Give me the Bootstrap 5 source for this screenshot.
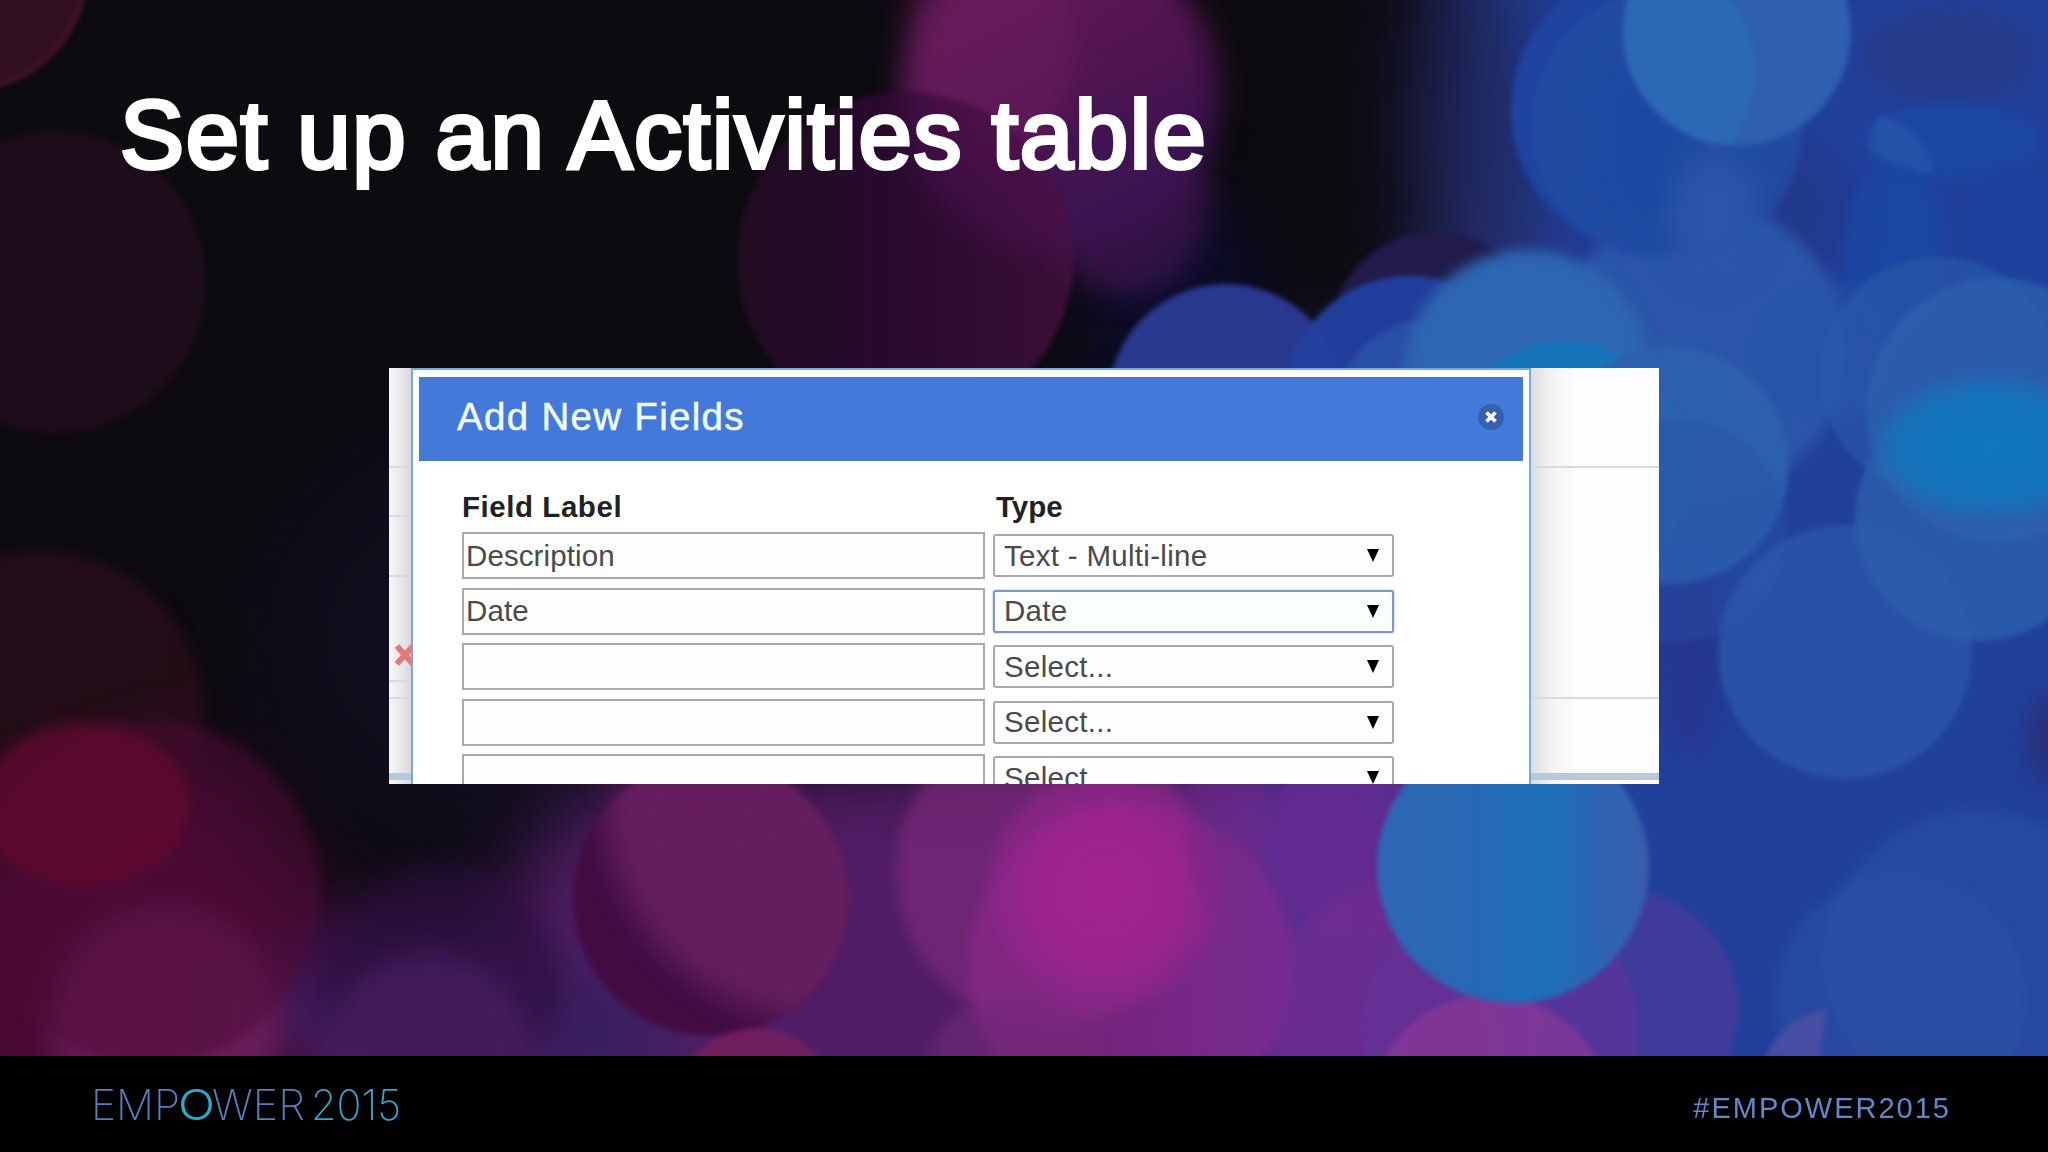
<!DOCTYPE html>
<html lang="en">
<head>
<meta charset="utf-8">
<meta name="viewport" content="width=device-width, initial-scale=1">
<title>Set up an Activities table</title>
<link href="https://cdn.jsdelivr.net/npm/bootstrap@5.3.0/dist/css/bootstrap.min.css" rel="stylesheet">
<style>
  body { font-family: "Liberation Sans", Arial, sans-serif; background: #0c0a12; overflow: hidden; }
  .slide { width: 2048px; height: 1152px; }
  .bokeh { z-index: 0; }
  .bokeh filter { color-interpolation-filters: sRGB; }
  .slide-head { height: 368px; padding: 75px 0 0 120px; z-index: 1; }
  .slide-title { font-size: 96px; line-height: 120px; letter-spacing: 1.6px; font-weight: 400; color: #fff; -webkit-text-stroke: 4px #fff; }
  .slide-body { padding-left: 389px; z-index: 1; }
  .shot { width: 1270px; height: 416px; background: #fdfdfe; }
  .shot-left { width: 22px; background: linear-gradient(90deg, #f7f7f7, #d9dadd); }
  .shot-right { width: 128px; background: linear-gradient(90deg, #dcdde0, #f4f4f6 22px, #fdfdff 48px); }
  .rule { height: 2px; background: #d9dade; }
  .rule-blue { height: 7px; background: #b9c8d9; margin-bottom: 4px; }
  .dlg { width: 1120px; border: 2px solid #76a9dc; border-bottom: 0; padding: 7px 6px 0; background: #fff; }
  .dlg-head { height: 84px; background: #4379d8; border-top: 1px solid #5a6fc0; border-bottom: 2px solid #4c7cbc; padding: 0 18px 2px 38px; }
  .dlg-title { font-size: 38.5px; letter-spacing: 1.3px; color: #f0fbff; line-height: 1; -webkit-text-stroke: .5px #f0fbff; }
  .dlg-body { padding: 27px 0 0 43px; }
  .col-label { width: 531px; }
  .heads { height: 44px; font-size: 29.5px; font-weight: 700; line-height: 37px; color: #222; letter-spacing: .55px; }
  .heads .type-head { letter-spacing: 0; padding-left: 3px; }
  .line-row { height: 55.6px; }
  .fld { width: 523px; height: 47px; border: 2px solid #aaa9ab; border-radius: 0; padding: 0 2px; font-size: 29.5px; letter-spacing: .1px; color: #4a4a4c; background: #fefefe; }
  .sel-wrap { width: 401px; margin-left: 8px; height: 42.5px; margin-top: 2px; }
  .sel { height: 43px; border: 2px solid #a9a9aa; border-radius: 3px; padding: 0 0 0 9px; font-size: 29.5px; line-height: 38px; letter-spacing: .3px; color: #4a4a4c; background: #fefefe none; }
  .sel.active-sel { border-color: #8296c2; background-color: #fafffe; box-shadow: 0 0 2px #7f9fd0; }
  .tri { right: 15px; top: 15px; }
  .foot { height: 96px; background: #000; padding: 0 97px 0 0; z-index: 1; }
  .hashtag { font-size: 29px; letter-spacing: 2px; line-height: 30px; color: #6189c9; margin-top: 7px; }
  .brand { font-family: Inter, "Liberation Sans", sans-serif; font-size: 42.5px; font-weight: 200; }
</style>
</head>
<body>
<main class="slide position-relative d-flex flex-column">
  <svg class="bokeh position-absolute top-0 start-0" width="2048" height="1058" viewBox="0 0 2048 1058" aria-hidden="true">
    <defs>
      <filter id="b1" x="-20%" y="-20%" width="140%" height="140%"><feGaussianBlur stdDeviation="2.5"/></filter>
      <filter id="bs" x="-20%" y="-20%" width="140%" height="140%"><feGaussianBlur stdDeviation="6"/></filter>
      <filter id="b2" x="-30%" y="-30%" width="160%" height="160%"><feGaussianBlur stdDeviation="14"/></filter>
      <filter id="b3" x="-50%" y="-50%" width="200%" height="200%"><feGaussianBlur stdDeviation="40"/></filter>
      <linearGradient id="orb"><stop offset="0" stop-color="#2f68b4"/><stop offset=".35" stop-color="#2868b4"/><stop offset=".6" stop-color="#1c6fba"/><stop offset="1" stop-color="#3a5dac"/></linearGradient>
      <linearGradient id="mag" x1="0" y1="0" x2=".5" y2="1"><stop offset="0" stop-color="#6d1c5e"/><stop offset=".6" stop-color="#501450"/><stop offset="1" stop-color="#32104f"/></linearGradient>
      <linearGradient id="plum" x1="0" x2="1"><stop offset="0" stop-color="#280e28"/><stop offset=".45" stop-color="#340a3a"/><stop offset="1" stop-color="#4d1145"/></linearGradient>
      <radialGradient id="hot"><stop offset="0" stop-color="#a5238f"/><stop offset=".6" stop-color="#a0248e" stop-opacity=".85"/><stop offset="1" stop-color="#90268c" stop-opacity=".45"/></radialGradient>
      <radialGradient id="cyan"><stop offset="0" stop-color="#0f78be"/><stop offset=".7" stop-color="#1475bc"/><stop offset="1" stop-color="#1c70b8" stop-opacity=".6"/></radialGradient>
      <clipPath id="orbClip"><circle cx="711" cy="898" r="138"/></clipPath>
      <clipPath id="topClip"><circle cx="1737" cy="32" r="114"/></clipPath>
    </defs>
    <rect width="2048" height="1058" fill="#0d0a10"/>
    <g filter="url(#b3)">
      <ellipse cx="500" cy="640" rx="240" ry="220" fill="#110d1c"/>
      <path d="M1440 -80H2150V1150H1300L1380 800L1180 430L1420 320Z" fill="#20409c"/>
      <path d="M590 790L1420 720L1480 1150H350L420 1010Z" fill="#521d66"/>
      <path d="M1180 740H1420V1120H1180Z" fill="#5c2c90"/>
      <path d="M-80 860L200 760L370 960V1140H-80Z" fill="#4a0a35"/>
      <ellipse cx="1180" cy="330" rx="80" ry="130" fill="#0b0c2e"/>
      <ellipse cx="1475" cy="130" rx="60" ry="190" fill="#20275f"/>
      <ellipse cx="1500" cy="250" rx="50" ry="60" fill="#262a68"/>
      <ellipse cx="440" cy="1010" rx="200" ry="80" fill="#3d1b5e"/>
      <ellipse cx="610" cy="1040" rx="60" ry="60" fill="#33205e"/>
    </g>
    <g filter="url(#b2)">
      <circle cx="1060" cy="95" r="160" fill="url(#mag)"/>
      <ellipse cx="1125" cy="200" rx="85" ry="95" fill="#401552" opacity=".7"/>
      <ellipse cx="990" cy="40" rx="85" ry="130" fill="#6e1d5e" opacity=".5"/>
      <circle cx="165" cy="1020" r="115" fill="#72205f" opacity=".8"/>
      <circle cx="440" cy="985" r="120" fill="#2c0e3e" opacity=".65"/>
      <circle cx="430" cy="1060" r="105" fill="#4c2069" opacity=".65"/>
      <ellipse cx="1800" cy="210" rx="55" ry="75" fill="#223a8e"/>
      <ellipse cx="1950" cy="55" rx="90" ry="50" fill="#253b88"/>
      <ellipse cx="2052" cy="740" rx="25" ry="50" fill="#28307a"/>
      <ellipse cx="1690" cy="650" rx="35" ry="110" fill="#26368f"/>
    </g>
    <g filter="url(#bs)">
      <circle cx="40" cy="715" r="164" fill="#3c1020" opacity=".5"/>
      <circle cx="148" cy="892" r="172" fill="#4c0b34" opacity=".55"/>
      <ellipse cx="85" cy="805" rx="104" ry="82" fill="#640a30" opacity=".75"/>
      <circle cx="1050" cy="872" r="154" fill="#782878" opacity=".72"/>
      <circle cx="1130" cy="965" r="162" fill="#8c298e" opacity=".6"/>
      <circle cx="1105" cy="890" r="118" fill="url(#hot)"/>
      <circle cx="1010" cy="1080" r="85" fill="#742a78" opacity=".55"/>
      <ellipse cx="1225" cy="820" rx="40" ry="100" fill="#752888" opacity=".4"/>
      <circle cx="1370" cy="840" r="100" fill="#6a2994" opacity=".5"/>
      <circle cx="1410" cy="1015" r="138" fill="#742d94" opacity=".6"/>
      <circle cx="1975" cy="960" r="150" fill="#2b50a5" opacity=".55"/>
      <circle cx="1900" cy="1000" r="125" fill="#3054a8" opacity=".45"/>
      <ellipse cx="1950" cy="140" rx="88" ry="36" fill="#1c48a2"/>
      <ellipse cx="1895" cy="250" rx="50" ry="90" fill="#1a47a2" opacity=".8"/>
      <ellipse cx="2010" cy="240" rx="42" ry="80" fill="#1d429d"/>
      <circle cx="1702" cy="350" r="146" fill="#2a55a8"/>
      <circle cx="1820" cy="350" r="70" fill="#2856a8" opacity=".4"/>
    </g>
    <g filter="url(#b1)">
      <circle cx="-35" cy="-32" r="122" fill="#32101f" stroke="#48142a" stroke-width="4"/>
      <circle cx="55" cy="282" r="151" fill="#1d0d1b"/>
      <circle cx="905" cy="260" r="168" fill="url(#plum)" opacity=".72"/>

      <circle cx="711" cy="898" r="138" fill="#430d44"/>
      <g clip-path="url(#orbClip)"><circle cx="826" cy="800" r="222" fill="#662062" filter="url(#b2)" opacity=".92"/></g>
      <ellipse cx="700" cy="770" rx="100" ry="50" fill="#6a1a5c" opacity=".45" filter="url(#b2)"/>
      <circle cx="755" cy="1112" r="84" fill="#7a205c" opacity=".7"/>
      <circle cx="1620" cy="1008" r="119" fill="#48399a" opacity=".75"/>
      <circle cx="1500" cy="1030" r="138" fill="#64329a" opacity=".65"/>
      <circle cx="1490" cy="1115" r="120" fill="#923896" opacity=".6"/>

      <circle cx="1436" cy="338" r="106" fill="#211c4c"/>
      <circle cx="1655" cy="110" r="144" fill="#1e449f"/>
      <circle cx="1668" cy="125" r="136" fill="#2350a7" opacity=".6"/>
      <ellipse cx="1640" cy="140" rx="42" ry="95" fill="#1947a0" opacity=".6" filter="url(#b2)"/>
      <path d="M1878 115Q1925 125 1934 174Q1880 165 1868 145Z" fill="#2551a7"/>
      <ellipse cx="1715" cy="215" rx="45" ry="60" fill="#2a55a8" filter="url(#b2)"/>
      <g clip-path="url(#topClip)">
        <circle cx="1737" cy="32" r="114" fill="#2e60af"/>
        <circle cx="1640" cy="70" r="115" fill="#2c69b5"/>
      </g>

      <circle cx="1226" cy="402" r="118" fill="#29388f"/>
      <circle cx="1410" cy="402" r="126" fill="#2340a0" opacity=".95"/>
      <circle cx="1430" cy="415" r="95" fill="#2a55ab" opacity=".8"/>
      <circle cx="1527" cy="372" r="122" fill="#2e66b1" filter="url(#bs)"/>
      <circle cx="1565" cy="465" r="124" fill="#1476bc" opacity=".9"/>
      <circle cx="1670" cy="465" r="119" fill="#2c61ad" opacity=".88"/>
      <circle cx="1675" cy="530" r="112" fill="#2857aa" opacity=".35"/>

      <circle cx="1938" cy="375" r="118" fill="#2b59aa" opacity=".65"/>
      <circle cx="1998" cy="410" r="132" fill="#2e62ae" opacity=".75"/>
      <circle cx="1978" cy="518" r="123" fill="#2e61ae" opacity=".75"/>
      <ellipse cx="1990" cy="447" rx="112" ry="70" fill="url(#cyan)" filter="url(#bs)"/>
      <circle cx="1845" cy="652" r="127" fill="#2f5eac" opacity=".62"/>
      <path d="M1765 1058Q1780 1020 1827 1008L1820 1058Z" fill="#514fa5" opacity=".8"/>
      <circle cx="1513" cy="867" r="136" fill="url(#orb)"/>
    </g>
  </svg>

  <header class="slide-head position-relative">
    <h1 class="slide-title m-0 text-nowrap">Set up an Activities table</h1>
  </header>

  <section class="slide-body position-relative flex-grow-1">
    <div class="shot d-flex overflow-hidden">
      <div class="shot-left d-flex flex-column flex-shrink-0">
        <div class="rule" style="margin-top:98px"></div>
        <div class="rule" style="margin-top:47px"></div>
        <div class="rule" style="margin-top:58px"></div>
        <svg style="margin-top:66px" width="22" height="24" viewBox="0 0 22 24"><path d="M8 3Q12 8 16 12Q12 16 8 21M24 3L16 12L24 21" fill="none" stroke="#e3787a" stroke-width="6"/></svg>
        <div class="rule" style="margin-top:13px"></div>
        <div class="rule" style="margin-top:15px"></div>
        <div class="rule-blue mt-auto"></div>
      </div>
      <div class="dlg flex-shrink-0">
        <div class="dlg-head d-flex align-items-center justify-content-between">
          <div class="dlg-title">Add New Fields</div>
          <svg width="28" height="30" viewBox="0 0 28 30" role="img" aria-label="Close"><circle cx="14" cy="14" r="13" fill="#3562ae"/><path d="M9.5 9.5L18.5 18.5M18.5 9.5L9.5 18.5" stroke="#fff" stroke-width="3.8"/></svg>
        </div>
        <div class="dlg-body">
          <div class="heads d-flex"><div class="col-label">Field Label</div><div class="type-head">Type</div></div>
          <div class="line-row d-flex"><input class="form-control fld" value="Description" aria-label="Field label 1"><div class="sel-wrap position-relative"><select class="form-select sel" aria-label="Type 1"><option>Text - Multi-line</option></select><svg class="tri position-absolute pe-none" width="12" height="13"><path d="M0 0H12L6 13Z"/></svg></div></div>
          <div class="line-row d-flex"><input class="form-control fld" value="Date" aria-label="Field label 2"><div class="sel-wrap position-relative"><select class="form-select sel active-sel" aria-label="Type 2"><option>Date</option></select><svg class="tri position-absolute pe-none" width="12" height="13"><path d="M0 0H12L6 13Z"/></svg></div></div>
          <div class="line-row d-flex"><input class="form-control fld" aria-label="Field label 3"><div class="sel-wrap position-relative"><select class="form-select sel" aria-label="Type 3"><option>Select...</option></select><svg class="tri position-absolute pe-none" width="12" height="13"><path d="M0 0H12L6 13Z"/></svg></div></div>
          <div class="line-row d-flex"><input class="form-control fld" aria-label="Field label 4"><div class="sel-wrap position-relative"><select class="form-select sel" aria-label="Type 4"><option>Select...</option></select><svg class="tri position-absolute pe-none" width="12" height="13"><path d="M0 0H12L6 13Z"/></svg></div></div>
          <div class="line-row d-flex"><input class="form-control fld" aria-label="Field label 5"><div class="sel-wrap position-relative"><select class="form-select sel" aria-label="Type 5"><option>Select...</option></select><svg class="tri position-absolute pe-none" width="12" height="13"><path d="M0 0H12L6 13Z"/></svg></div></div>
        </div>
      </div>
      <div class="shot-right d-flex flex-column flex-shrink-0">
        <div class="rule" style="margin-top:98px"></div>
        <div class="rule" style="margin-top:229px"></div>
        <div class="rule-blue mt-auto"></div>
      </div>
    </div>
  </section>

  <footer class="foot position-relative d-flex align-items-center justify-content-between">
    <svg width="420" height="96" viewBox="0 0 420 96" role="img" aria-label="EMPOWER 2015">
      <text class="brand" x="91" y="64" textLength="89" lengthAdjust="spacingAndGlyphs" fill="#557fbd">EMP</text>
      <text class="brand" x="178" y="64" textLength="37" lengthAdjust="spacingAndGlyphs" fill="#27acd2" style="font-weight:300">O</text>
      <text class="brand" x="212" y="64" textLength="93" lengthAdjust="spacingAndGlyphs" fill="#557fbd">WER</text>
      <text class="brand" x="311" y="64" textLength="90" lengthAdjust="spacingAndGlyphs" fill="#35a5cc">2015</text>
    </svg>
    <div class="hashtag">#EMPOWER2015</div>
  </footer>
</main>
<script src="https://cdn.jsdelivr.net/npm/bootstrap@5.3.0/dist/js/bootstrap.bundle.min.js"></script>
</body>
</html>
